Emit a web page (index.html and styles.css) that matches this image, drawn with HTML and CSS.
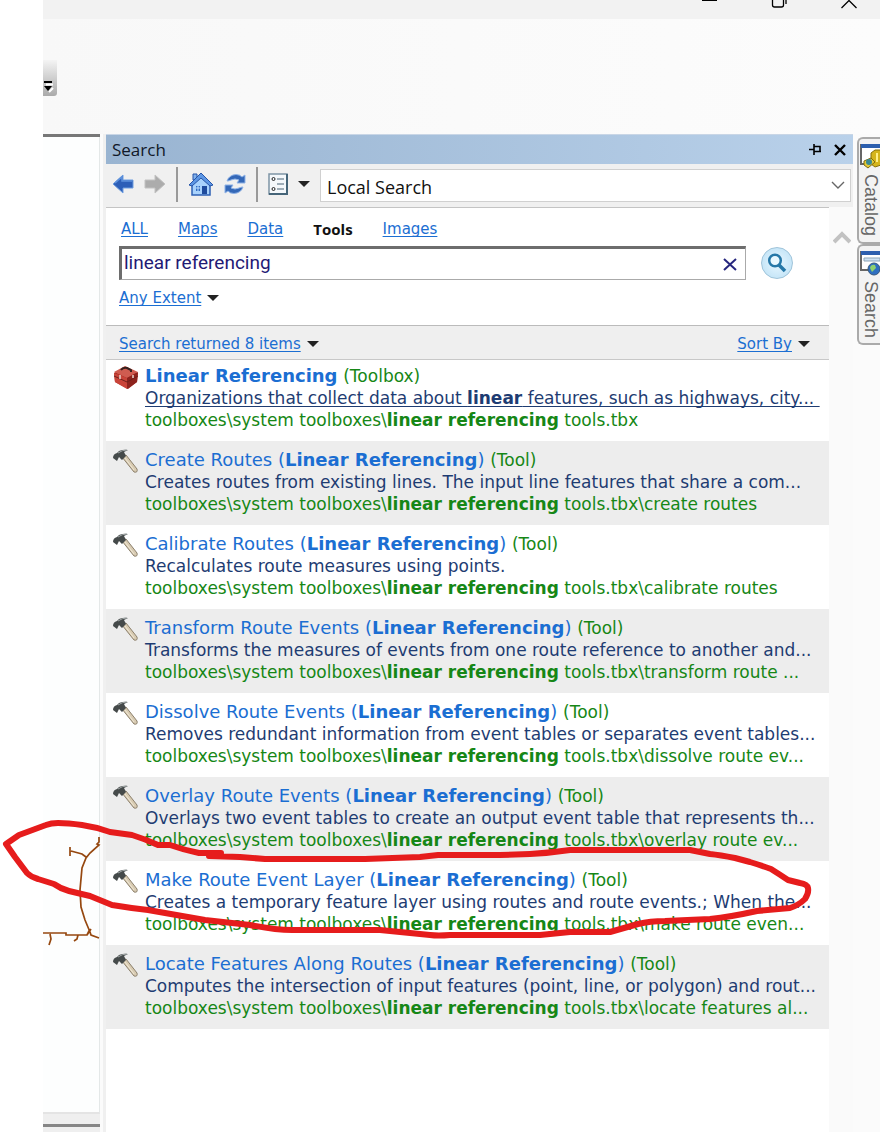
FILE: index.html
```html
<!DOCTYPE html>
<html lang="en">
<head>
<meta charset="utf-8">
<title>Search</title>
<link rel="stylesheet" href="styles.css">
</head>
<body>
<svg class="defs" aria-hidden="true">
  <symbol id="hammer" viewBox="0 0 26 26">
    <path d="M9 8 L13 6 L24 20 Q25 24 21 23 Z" fill="#d8cbb2" stroke="#8c806c" stroke-width="1"/>
    <path d="M12 9 L21 21" stroke="#f0e8d6" stroke-width="1"/>
    <path d="M0 9 Q0 5 4 4 L6 2 Q11 0 15 1 L11 3 L13 7 L9 11 L6 8 L4 12 Z" fill="#454a4a"/>
    <path d="M5 4 Q9 1 14 1" stroke="#a3a9a9" stroke-width="1" fill="none"/>
  </symbol>
  <symbol id="caret" viewBox="0 0 12 8"><path d="M0 1 H12 L6 7 Z" fill="#222"/></symbol>
</svg>
<div class="app">
  <header class="titlebar">
    <button class="win" aria-label="Minimize"><svg width="16" height="12"><path d="M1 0.500H16" stroke="#000"/></svg></button>
    <button class="win" aria-label="Restore"><svg width="16" height="12"><path d="M1.500 -3V5Q1.500 7 3.500 7H10.500Q12.500 7 12.500 5V-3M15 -2V4" fill="none" stroke="#000" stroke-width="1.300"/></svg></button>
    <button class="win" aria-label="Close"><svg width="16" height="12"><path d="M0.500 8 L8 0.500 L15.500 8" fill="none" stroke="#000" stroke-width="1.300"/></svg></button>
  </header>
  <div class="ribbon">
    <button class="overflow" aria-label="Toolbar options"><svg width="13" height="16"><path d="M3 5.500h7M6 13l4 -4" stroke="#fff" stroke-width="2" fill="none"/><path d="M1 3h8" stroke="#000" stroke-width="2"/><path d="M1 7h8l-4 5z"/></svg></button>
  </div>
  <div class="workspace">
    <div class="map"><div class="canvas"></div><div class="status"></div></div>
    <section class="panel">
      <div class="panel-head">
        <h1>Search</h1>
        <button class="plain" aria-label="Pin"><svg width="13" height="12"><path d="M0 5.500H5M5 0V11M5 2.500H11V7.500H5M5 7.500H12" fill="none" stroke="#000" stroke-width="1.600"/></svg></button>
        <button class="plain" aria-label="Close panel"><svg width="12" height="12"><path d="M1 1L11 11M11 1L1 11" stroke="#000" stroke-width="2.400"/></svg></button>
      </div>
      <div class="toolbar">
        <button class="plain" aria-label="Back"><svg width="22" height="20"><path d="M1 10L11 1V6H21V14H11V19Z" fill="#2d5fb8" stroke="#6f9ee0"/><path d="M3 9L10 3V7H20" fill="none" stroke="#5d91dc" stroke-width="1.500"/></svg></button>
        <button class="plain" aria-label="Forward"><svg width="22" height="20"><path d="M21 10L11 1V6H1V14H11V19Z" fill="#acacac" stroke="#c2c2c2"/></svg></button>
        <span class="sep"></span>
        <button class="plain" aria-label="Home"><svg width="26" height="26" viewBox="0 0 26 26"><path d="M5 3h4v6H5z" fill="#7fb0ec" stroke="#2755a8"/><path d="M4 12L13 4L22 12V24H4Z" fill="#a8d2fc" stroke="#2e60b4" stroke-width="1.500"/><path d="M1 14L13 2L25 14L22 15L13 7L4 15Z" fill="#5c96e4" stroke="#2755a8"/><path d="M8 15h4v5H8z" fill="#316dc4"/><path d="M14 15h5v8h-5z" fill="#1e4b9d"/><path d="M10 15v5M8 17h4" stroke="#bfe0ff"/></svg></button>
        <button class="plain" aria-label="Refresh"><svg width="22" height="24" viewBox="0 0 22 24"><path d="M3 9Q5 3 12 2.500Q16 2.500 18 5L21 3V11H13L15 8Q11 6 7 8Q5 9 3 9Z" fill="#3468b8" stroke="#8fb3e7"/><path d="M19 15Q17 21 10 21.500Q6 21.500 4 19L1 21V13H9L7 16Q11 18 15 16Q17 15 19 15Z" fill="#3468b8" stroke="#8fb3e7"/></svg></button>
        <span class="sep"></span>
        <button class="plain options" aria-label="Options"><svg width="20" height="22"><path d="M1 1H19V21H1Z" fill="#f4f8fb" stroke="#7d94a5" stroke-width="1.500"/><path d="M1 21H19V1" fill="none" stroke="#456579" stroke-width="2"/><path d="M9 6h7M9 11h7M9 16h7" stroke="#8194a2" stroke-width="1.500"/><circle cx="5.500" cy="6" r="1.500" fill="none" stroke="#222"/><circle cx="5.500" cy="16" r="1.500" fill="none" stroke="#222"/></svg><svg class="caret"><use href="#caret"/></svg></button>
        <div class="combo">
          <select aria-label="Search location"><option>Local Search</option></select>
          <svg width="14" height="9"><path d="M1 1L7 7L13 1" fill="none" stroke="#666" stroke-width="1.400"/></svg>
        </div>
      </div>
      <div class="panel-body">
        <main class="content">
          <div class="query">
            <nav class="tabs"><a href="#">ALL</a><a href="#">Maps</a><a href="#">Data</a><strong>Tools</strong><a href="#">Images</a></nav>
            <div class="search-row">
              <div class="field">
                <input type="text" aria-label="Search terms" value="linear referencing">
                <button class="plain" aria-label="Clear"><svg width="14" height="14"><path d="M1 2L13 13M13 2L1 13" stroke="#26267e" stroke-width="2"/></svg></button>
              </div>
              <button class="go" aria-label="Search"><svg width="20" height="20"><circle cx="8" cy="7.500" r="5.800" fill="#e9f8ff" stroke="#2678a8" stroke-width="2.500"/><path d="M12 12L18 18" stroke="#2678a8" stroke-width="3.500"/></svg></button>
            </div>
            <div class="extent"><a href="#">Any Extent</a><svg class="caret"><use href="#caret"/></svg></div>
          </div>
          <div class="summary">
            <a href="#">Search returned 8 items</a><svg class="caret"><use href="#caret"/></svg>
            <a class="sort" href="#">Sort By</a><svg class="caret"><use href="#caret"/></svg>
          </div>
          <ul class="results">
            <li><svg class="icon" viewBox="0 0 26 26"><path d="M1 8L12 2L25 8L24 17L15 24L2 17Z" fill="#a62b24"/><path d="M1 7L12 1L25 7L14 13Z" fill="#cf5c50"/><path d="M1 8L14 13V24L2 17Z" fill="#c94439"/><path d="M14 13L25 7L24 17L14 24Z" fill="#8d231d"/><path d="M8 5Q10 2 14 3L18 5V7" fill="none" stroke="#35211f" stroke-width="2"/><path d="M1 11L14 17L25 11" fill="none" stroke="#6d211c" stroke-width="1"/><path d="M7 10V14M20 10V13" stroke="#e7d8cf" stroke-width="1.500"/></svg>
              <div class="text"><h2><a href="#"><b>Linear Referencing</b></a> <small>(Toolbox)</small></h2><p class="desc hover">Organizations that collect data about <b>linear</b> features, such as highways, city...&nbsp;</p><p class="path">toolboxes\system toolboxes\<b>linear referencing</b> tools.tbx</p></div></li>
            <li><svg class="icon"><use href="#hammer"/></svg>
              <div class="text"><h2><a href="#">Create Routes (<b>Linear Referencing</b>)</a> <small>(Tool)</small></h2><p class="desc">Creates routes from existing lines. The input line features that share a com...</p><p class="path">toolboxes\system toolboxes\<b>linear referencing</b> tools.tbx\create routes</p></div></li>
            <li><svg class="icon"><use href="#hammer"/></svg>
              <div class="text"><h2><a href="#">Calibrate Routes (<b>Linear Referencing</b>)</a> <small>(Tool)</small></h2><p class="desc">Recalculates route measures using points.</p><p class="path">toolboxes\system toolboxes\<b>linear referencing</b> tools.tbx\calibrate routes</p></div></li>
            <li><svg class="icon"><use href="#hammer"/></svg>
              <div class="text"><h2><a href="#">Transform Route Events (<b>Linear Referencing</b>)</a> <small>(Tool)</small></h2><p class="desc">Transforms the measures of events from one route reference to another and...</p><p class="path">toolboxes\system toolboxes\<b>linear referencing</b> tools.tbx\transform route ...</p></div></li>
            <li><svg class="icon"><use href="#hammer"/></svg>
              <div class="text"><h2><a href="#">Dissolve Route Events (<b>Linear Referencing</b>)</a> <small>(Tool)</small></h2><p class="desc">Removes redundant information from event tables or separates event tables...</p><p class="path">toolboxes\system toolboxes\<b>linear referencing</b> tools.tbx\dissolve route ev...</p></div></li>
            <li><svg class="icon"><use href="#hammer"/></svg>
              <div class="text"><h2><a href="#">Overlay Route Events (<b>Linear Referencing</b>)</a> <small>(Tool)</small></h2><p class="desc">Overlays two event tables to create an output event table that represents th...</p><p class="path">toolboxes\system toolboxes\<b>linear referencing</b> tools.tbx\overlay route ev...</p></div></li>
            <li><svg class="icon"><use href="#hammer"/></svg>
              <div class="text"><h2><a href="#">Make Route Event Layer (<b>Linear Referencing</b>)</a> <small>(Tool)</small></h2><p class="desc">Creates a temporary feature layer using routes and route events.; When the...</p><p class="path">toolboxes\system toolboxes\<b>linear referencing</b> tools.tbx\make route even...</p></div></li>
            <li><svg class="icon"><use href="#hammer"/></svg>
              <div class="text"><h2><a href="#">Locate Features Along Routes (<b>Linear Referencing</b>)</a> <small>(Tool)</small></h2><p class="desc">Computes the intersection of input features (point, line, or polygon) and rout...</p><p class="path">toolboxes\system toolboxes\<b>linear referencing</b> tools.tbx\locate features al...</p></div></li>
          </ul>
        </main>
        <div class="scroll"><svg width="18" height="14"><path d="M1 11L9 3L17 11" fill="none" stroke="#c2c2c2" stroke-width="4"/></svg></div>
      </div>
    </section>
    <aside class="dock">
      <button class="dock-tab catalog"><svg width="21" height="26"><path d="M1 1H21V20H1Z" fill="#fff" stroke="#666" stroke-width="2"/><path d="M1 0H21V4H1Z" fill="#2d5fae"/><path d="M11 9L15 6H21V21L15 23L11 20Z" fill="#d5b51c" stroke="#84700c"/><path d="M4 17L11 14L15 18L8 24L4 21Z" fill="#e5ca35" stroke="#7e6a10"/><circle cx="9" cy="18" r="3" fill="#3b8a93"/><path d="M17 9v9" stroke="#fff08a" stroke-width="2"/></svg><span>Catalog</span></button>
      <button class="dock-tab"><svg width="21" height="26"><path d="M1 1H21V19H1Z" fill="#fff" stroke="#666" stroke-width="2"/><path d="M1 0H21V4H1Z" fill="#2d5fae"/><path d="M4 7H20V10H4Z" fill="#cfe2f2" stroke="#8da5b8"/><circle cx="14" cy="18" r="6" fill="#2e6fc0" stroke="#36577d"/><path d="M10 17Q11 13 15 14L16 17L12 21Z" fill="#8fd16f"/></svg><span>Search</span></button>
    </aside>
  </div>
</div>
<svg class="ink" viewBox="0 0 880 1132" width="880" height="1132" aria-hidden="true">
  <g fill="none" stroke="#964810" stroke-width="1.700">
    <path d="M99 837V842L97 844L99 845L90 853L86 858L82 868L80 890L81 907L85 920L90 932L91 935L99 938M86 857L82 854L71 851M70 847V856M43 933H66V935H87L90 929M87 935L91 929M50 934L51 939L49 945M78 935L77 939L74 941"/>
  </g>
  <path d="M221 853H199Q184 850 170 845H158Q145 839 132 835L110 832Q96 827 82 825Q68 823 58 823Q51 823 46 825L19 835L6 844L15 857L27 873Q31 877 38 879L54 884Q61 889 69 891L90 896L112 905Q130 908 148 910L205 920L250 925Q275 930 292 930H380L430 935Q438 936 450 935H540L570 932H610Q624 928 638 924Q650 921 665 921L710 919Q730 917 757 911L790 908Q799 905 805 899Q809 893 808 888Q807 884 800 883L788 880Q779 874 771 869Q760 865 750 862L735 858Q720 855 710 854L690 850H570Q550 853 530 854L500 855H438L420 857L365 859H265L240 857L209 856" fill="none" stroke="#e61c1c" stroke-width="6" stroke-linecap="round" stroke-linejoin="round"/>
</svg>
</body>
</html>
```
FILE: styles.css
```css
* { box-sizing: border-box; }
html, body { height: 100%; }
body { margin: 0; background: #fff; font-family: "DejaVu Sans", Verdana, sans-serif; }
h1, h2, p, ul { margin: 0; padding: 0; font-weight: normal; }
button { border: 0; background: none; padding: 0; display: block; font: inherit; }
svg { display: block; flex: none; }
a { color: #1b6ed2; text-underline-offset: 2px; text-decoration-skip-ink: none; }
.defs { position: absolute; width: 0; height: 0; }
.app { margin-left: 43px; min-height: 100vh; display: flex; flex-direction: column; background: #efefef; }
.titlebar { height: 19px; background: #f2f2f2; display: flex; justify-content: flex-end; gap: 54px; padding-right: 23px; }
.win { height: 12px; }
.ribbon { height: 115px; padding-top: 41px; background: linear-gradient(90deg, #f8f8f8, #fcfcfc); }
.overflow { width: 14px; height: 36px; padding-top: 18px; border-radius: 0 0 3px; background: linear-gradient(#f4f4f4, #aaa); }
.workspace { flex: 1; display: flex; background: #fbfbfb; min-height: 0; }
.map { width: 57px; flex: none; border-top: 3px solid #777; display: flex; flex-direction: column; }
.canvas { flex: 1; background: #fdfefe; border-right: 1px solid #e4e8e8; border-bottom: 2px solid #e4e4e4; }
.status { height: 18px; background: linear-gradient(#efefef 10px, #868686 10px, #868686 13px, #efefef 13px); }
.panel { flex: 1; min-width: 0; margin-left: 3px; border-left: 3px solid #f0f0f0; display: flex; flex-direction: column; }
.panel-head { height: 30px; border-top: 1px solid #c9d6e6; background: linear-gradient(90deg, #99b4d1, #b9d1ea); display: flex; align-items: center; padding: 0 7px 0 6px; gap: 12px; }
.panel-head h1 { flex: 1; font: 17px "Open Sans", "Noto Sans", sans-serif; color: #101828; }
.toolbar { height: 43px; background: #f0f0f0; display: flex; align-items: center; padding: 0 2px 3px 6px; gap: 10px; }
.sep { width: 2px; height: 35px; background: #999; }
.options { display: flex; align-items: center; gap: 10px; }
.caret { width: 12px; height: 8px; }
.combo { flex: 1; display: grid; align-items: center; margin-top: 3px; height: 33px; background: #fff; border: 1px solid #d0d0d0; }
.combo select { grid-area: 1 / 1; appearance: none; border: 0; background: none; width: 100%; padding: 2px 0 0 6px; color: #111; font: 18px "Open Sans", "Noto Sans", sans-serif; }
.combo svg { grid-area: 1 / 1; justify-self: end; margin-right: 5px; }
.panel-body { flex: 1; display: flex; }
.content { flex: 1; min-width: 0; background: #fff; border-top: 1px solid #c4c4c4; }
.scroll { width: 24px; background: #fafafa; padding: 24px 0 0 4px; }
.query { height: 117px; padding: 10px 36px 0 13px; font-size: 15px; }
.tabs { display: flex; gap: 30px; line-height: 22px; padding-left: 2px; }
.tabs strong { font: bold 15px/22px "Open Sans", "Noto Sans", sans-serif; color: #111; }
.search-row { display: flex; align-items: center; gap: 15px; margin-top: 6px; }
.field { flex: 1; display: flex; align-items: center; height: 34px; padding-right: 8px; background: #fff; border: 1px solid #aaa; border-top: 3px solid #6d6d6d; border-left: 3px solid #6d6d6d; }
.field input { flex: 1; min-width: 0; border: 0; outline: 0; background: none; padding: 0 2px 3px; color: #1f1a75; font: 19px Roboto, "Liberation Sans", sans-serif; }
.go { width: 32px; height: 32px; border-radius: 50%; border: 1px solid #9fc4da; background: radial-gradient(#e8f7ff, #b9dff5); display: grid; place-items: center; }
.extent { display: flex; align-items: center; gap: 6px; line-height: 20px; margin-top: 8px; }
.summary { height: 35px; background: #efefef; border-top: 1px solid #bbb; border-bottom: 1px solid #c8c8c8; display: flex; align-items: center; gap: 6px; padding: 2px 19px 0 13px; font-size: 15px; }
.sort { margin-left: auto; }
.results { list-style: none; }
.results li { display: flex; gap: 6px; padding: 8px 4px 10px 7px; }
.results li:first-child { padding-top: 5px; }
.results li:nth-child(even) { background: #ededed; }
.icon { width: 26px; height: 26px; }
.text { flex: 1; min-width: 0; white-space: nowrap; line-height: 22px; font-size: 17px; }
.text h2 { font-size: 18px; line-height: 22px; }
.text h2 a { text-decoration: none; }
.text h2 small { font-size: 17px; line-height: 16px; color: #168716; }
.text p { line-height: 22px; }
.text .desc { color: #1e3c72; }
.text .path { color: #168716; }
.hover { text-decoration: underline; text-decoration-skip-ink: none; text-underline-offset: 2px; }
.dock { width: 27px; flex: none; padding: 3px 0 0 4px; }
.dock-tab { display: flex; flex-direction: column; align-items: flex-start; width: 23px; height: 101px; padding: 5px 0 0 1px; border: 2px solid #aaa; border-right: 0; border-radius: 6px 0 0 6px; background: #f3f3f3; color: #666; font: 18px "Liberation Sans", sans-serif; }
.dock-tab.catalog { height: 107px; }
.dock-tab span { writing-mode: vertical-rl; line-height: 22px; margin-top: 4px; }
.ink { position: absolute; left: 0; top: 0; pointer-events: none; }
```
